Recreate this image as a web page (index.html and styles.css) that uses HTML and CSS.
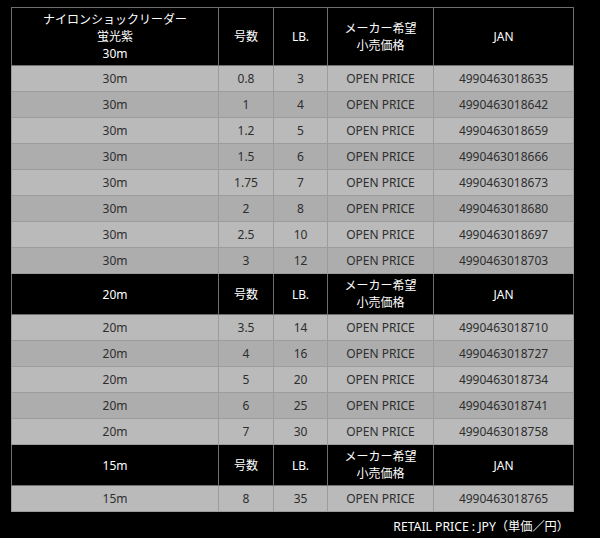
FILE: index.html
```html
<!DOCTYPE html>
<html lang="ja">
<head>
<meta charset="utf-8">
<link rel="stylesheet" href="styles.css">
</head>
<body>
<div class="wrap">
<table class="spec">
  <colgroup>
    <col class="c1"><col class="c2"><col class="c3"><col class="c4"><col class="c5">
  </colgroup>
  <tr class="head">
    <th>ナイロンショックリーダー<br>蛍光紫<br>30m</th><th>号数</th><th>LB.</th><th>メーカー希望<br>小売価格</th><th>JAN</th>
  </tr>
  <tr class="odd"><td>30m</td><td>0.8</td><td>3</td><td>OPEN PRICE</td><td>4990463018635</td></tr>
  <tr class="even"><td>30m</td><td>1</td><td>4</td><td>OPEN PRICE</td><td>4990463018642</td></tr>
  <tr class="odd"><td>30m</td><td>1.2</td><td>5</td><td>OPEN PRICE</td><td>4990463018659</td></tr>
  <tr class="even"><td>30m</td><td>1.5</td><td>6</td><td>OPEN PRICE</td><td>4990463018666</td></tr>
  <tr class="odd"><td>30m</td><td>1.75</td><td>7</td><td>OPEN PRICE</td><td>4990463018673</td></tr>
  <tr class="even"><td>30m</td><td>2</td><td>8</td><td>OPEN PRICE</td><td>4990463018680</td></tr>
  <tr class="odd"><td>30m</td><td>2.5</td><td>10</td><td>OPEN PRICE</td><td>4990463018697</td></tr>
  <tr class="even"><td>30m</td><td>3</td><td>12</td><td>OPEN PRICE</td><td>4990463018703</td></tr>
  <tr class="head">
    <th>20m</th><th>号数</th><th>LB.</th><th>メーカー希望<br>小売価格</th><th>JAN</th>
  </tr>
  <tr class="odd"><td>20m</td><td>3.5</td><td>14</td><td>OPEN PRICE</td><td>4990463018710</td></tr>
  <tr class="even"><td>20m</td><td>4</td><td>16</td><td>OPEN PRICE</td><td>4990463018727</td></tr>
  <tr class="odd"><td>20m</td><td>5</td><td>20</td><td>OPEN PRICE</td><td>4990463018734</td></tr>
  <tr class="even"><td>20m</td><td>6</td><td>25</td><td>OPEN PRICE</td><td>4990463018741</td></tr>
  <tr class="odd"><td>20m</td><td>7</td><td>30</td><td>OPEN PRICE</td><td>4990463018758</td></tr>
  <tr class="head">
    <th>15m</th><th>号数</th><th>LB.</th><th>メーカー希望<br>小売価格</th><th>JAN</th>
  </tr>
  <tr class="odd"><td>15m</td><td>8</td><td>35</td><td>OPEN PRICE</td><td>4990463018765</td></tr>
</table>
<p class="note">RETAIL PRICE : JPY（単価／円）</p>
</div>
</body>
</html>
```

FILE: styles.css
```css
html, body {
  margin: 0;
  padding: 0;
  background: #000;
}
body {
  font-family: "Noto Sans", "Noto Sans CJK JP", sans-serif;
  font-size: 12px;
}
.wrap {
  padding: 7px 0 0 11px;
  width: 562px;
}
.spec {
  border-collapse: collapse;
  table-layout: fixed;
  width: 562px;
  border: 1px solid #8a8a8a;
}
.c1 { width: 207px; }
.c2 { width: 55px; }
.c3 { width: 54px; }
.c4 { width: 106px; }
.c5 { width: 140px; }
.spec th, .spec td {
  text-align: center;
  line-height: 17px;
  border: 1px solid #9c9c9c;
  padding: 4px 0;
  white-space: nowrap;
}
.spec th {
  background: #000;
  color: #fff;
  font-weight: normal;
  padding: 3px 0;
  border-color: #6e6e6e;
}
.spec td {
  color: #2e2e2e;
}
.odd td { background: #bababa; }
.even td { background: #adadad; }
.note {
  margin: 6px 0 0 0;
  padding-right: 4px;
  text-align: right;
  color: #fff;
  font-size: 12.2px;
  line-height: 17px;
}
```
